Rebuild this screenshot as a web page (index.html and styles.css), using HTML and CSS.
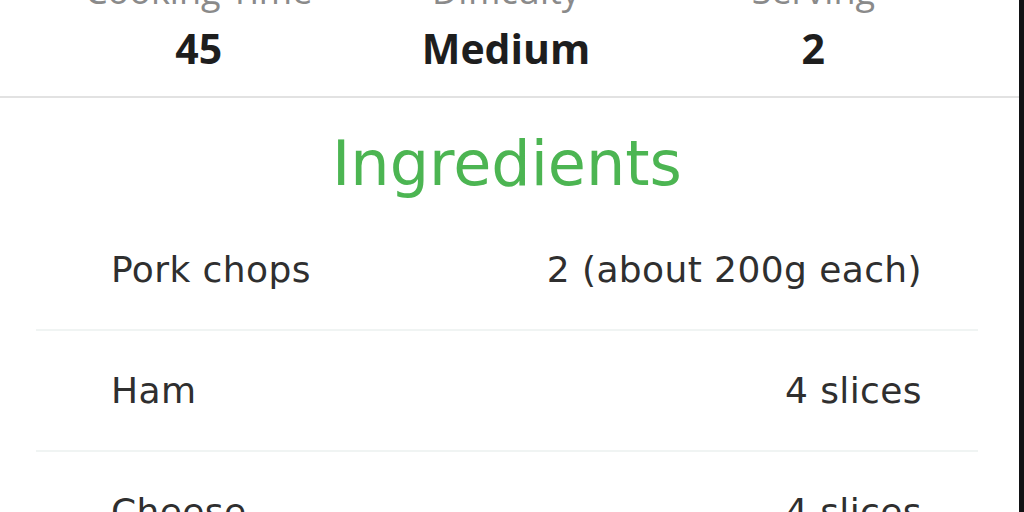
FILE: index.html
```html
<!DOCTYPE html>
<html lang="en">
<head>
<meta charset="utf-8">
<title>Recipe</title>
<link rel="stylesheet" href="styles.css">
</head>
<body>
<div class="app">
  <main class="screen">
    <section class="stats">
      <div class="stat">
        <span class="stat-label">Cooking Time</span>
        <span class="stat-value">45</span>
      </div>
      <div class="stat">
        <span class="stat-label">Difficulty</span>
        <span class="stat-value">Medium</span>
      </div>
      <div class="stat">
        <span class="stat-label">Serving</span>
        <span class="stat-value">2</span>
      </div>
    </section>
    <section class="ingredients">
      <h2 class="section-title">Ingredients</h2>
      <ul class="ingredient-list">
        <li class="ingredient"><span class="name">Pork chops</span><span class="qty">2 (about 200g each)</span></li>
        <li class="ingredient"><span class="name">Ham</span><span class="qty">4 slices</span></li>
        <li class="ingredient"><span class="name">Cheese</span><span class="qty">4 slices</span></li>
      </ul>
    </section>
  </main>
  <div class="edge"></div>
</div>
</body>
</html>
```
FILE: styles.css
```css
html, body {
  margin: 0;
  padding: 0;
  height: 100%;
  background: #ffffff;
  overflow: hidden;
}

.app {
  display: flex;
  height: 512px;
  overflow: hidden;
}

.screen {
  flex: 1;
  min-width: 0;
  overflow: hidden;
}

.edge {
  width: 5px;
  background: #111214;
}

.stats {
  display: grid;
  grid-template-columns: repeat(3, 1fr);
  padding: 0 52px 0 45px;
  margin-top: -31px;
  height: 129px;
  border-bottom: 2px solid #e2e2e2;
  box-sizing: border-box;
  font-family: "Open Sans", "Noto Sans", sans-serif;
}

.stat {
  display: flex;
  flex-direction: column;
  align-items: center;
}

.stat-label {
  font-size: 36px;
  line-height: 44px;
  color: #8a8a8a;
}

.stat-value {
  font-size: 41px;
  line-height: 50px;
  font-weight: 700;
  color: #1e1e1e;
  margin-top: 10px;
}

.ingredients {
  padding: 0 41px 0 36px;
}

.section-title {
  margin: 0;
  padding-top: 30px;
  height: 112px;
  box-sizing: border-box;
  text-align: center;
  font-family: "DejaVu Sans", "Noto Sans", sans-serif;
  font-weight: 400;
  font-size: 62px;
  line-height: 71px;
  color: #4cb552;
}

.ingredient-list {
  list-style: none;
  margin: 0;
  padding: 0;
}

.ingredient {
  display: flex;
  justify-content: space-between;
  align-items: center;
  height: 119px;
  padding: 0 56px 0 75px;
  border-bottom: 2px solid #f0f4f3;
  font-family: "DejaVu Sans", "Noto Sans", sans-serif;
  font-size: 36px;
  line-height: 42px;
  letter-spacing: 0.4px;
  color: #2f2f2f;
}
```
